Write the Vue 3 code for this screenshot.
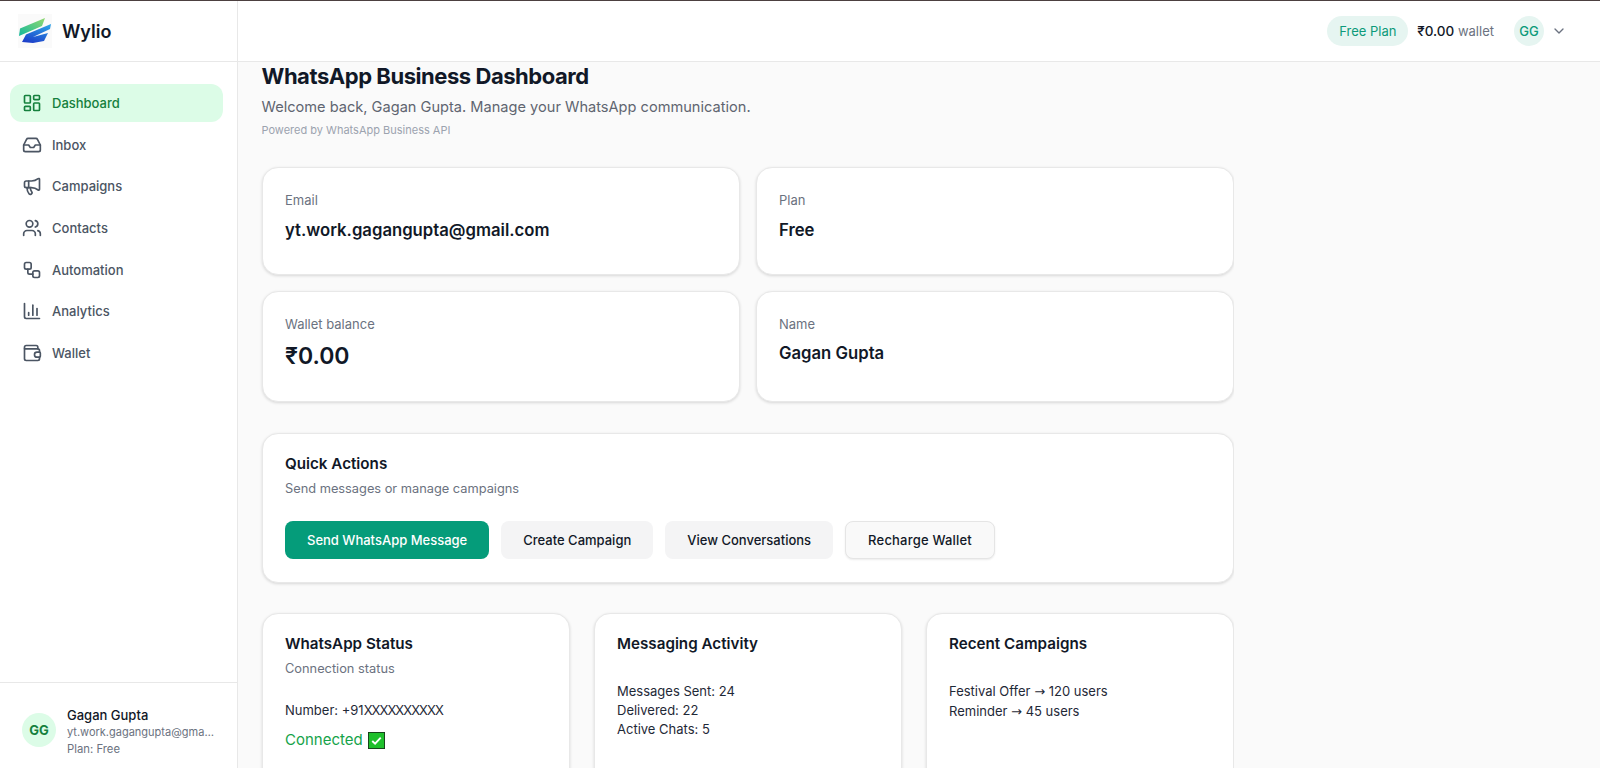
<script setup>
const navItems = [
  { label: 'Dashboard', active: true, paths: ['M4 3h5a1 1 0 0 1 1 1v7a1 1 0 0 1-1 1H4a1 1 0 0 1-1-1V4a1 1 0 0 1 1-1z','M15 3h5a1 1 0 0 1 1 1v3a1 1 0 0 1-1 1h-5a1 1 0 0 1-1-1V4a1 1 0 0 1 1-1z','M15 12h5a1 1 0 0 1 1 1v7a1 1 0 0 1-1 1h-5a1 1 0 0 1-1-1v-7a1 1 0 0 1 1-1z','M4 16h5a1 1 0 0 1 1 1v3a1 1 0 0 1-1 1H4a1 1 0 0 1-1-1v-3a1 1 0 0 1 1-1z'] },
  { label: 'Inbox', paths: ['M22 12h-6l-2 3h-4l-2-3H2','M5.45 5.11 2 12v6a2 2 0 0 0 2 2h16a2 2 0 0 0 2-2v-6l-3.45-6.89A2 2 0 0 0 16.76 4H7.24a2 2 0 0 0-1.79 1.11z'] },
  { label: 'Campaigns', paths: ['M11 6a13 13 0 0 0 8.4-2.8A1 1 0 0 1 21 4v12a1 1 0 0 1-1.6.8A13 13 0 0 0 11 14H5a2 2 0 0 1-2-2V8a2 2 0 0 1 2-2z','M6 14a12 12 0 0 0 2.4 7.2 2 2 0 0 0 3.2-2.4A8 8 0 0 1 10 14','M8 6v8'] },
  { label: 'Contacts', paths: ['M16 21v-2a4 4 0 0 0-4-4H6a4 4 0 0 0-4 4v2','M9 3a4 4 0 1 0 0 8 4 4 0 0 0 0-8z','M22 21v-2a4 4 0 0 0-3-3.87','M16 3.13a4 4 0 0 1 0 7.75'] },
  { label: 'Automation', paths: ['M5 3h4a2 2 0 0 1 2 2v4a2 2 0 0 1-2 2H5a2 2 0 0 1-2-2V5a2 2 0 0 1 2-2z','M15 13h4a2 2 0 0 1 2 2v4a2 2 0 0 1-2 2h-4a2 2 0 0 1-2-2v-4a2 2 0 0 1 2-2z','M7 11v4a2 2 0 0 0 2 2h4'] },
  { label: 'Analytics', paths: ['M3 3v16a2 2 0 0 0 2 2h16','M8 17v-3','M13 17V5','M18 17V9'] },
  { label: 'Wallet', paths: ['M19 7V5a2 2 0 0 0-2-2H5a2 2 0 0 0-2 2v14a2 2 0 0 0 2 2h14a2 2 0 0 0 2-2v-2','M3 7h16a2 2 0 0 1 2 2v2','M18 11h3a1 1 0 0 1 1 1v4a1 1 0 0 1-1 1h-3a3 3 0 0 1 0-6z'] }
]
const stats = [
  { label: 'Email', value: 'yt.work.gagangupta@gmail.com' },
  { label: 'Plan', value: 'Free' },
  { label: 'Wallet balance', value: '₹0.00', big: true },
  { label: 'Name', value: 'Gagan Gupta' }
]
const actions = [
  { label: 'Send WhatsApp Message', kind: 'primary' },
  { label: 'Create Campaign', kind: 'muted' },
  { label: 'View Conversations', kind: 'muted' },
  { label: 'Recharge Wallet', kind: 'outline' }
]
</script>

<template>
  <div class="app">
    <aside class="sidebar">
      <div class="brand">
        <svg class="logo" viewBox="0 0 34 34" aria-hidden="true">
          <rect width="34" height="34" fill="#fafafa" />
          <defs>
            <linearGradient id="g1" x1="0" y1="1" x2="1" y2="0"><stop offset="0" stop-color="#12b89c" /><stop offset="1" stop-color="#92d96f" /></linearGradient>
            <linearGradient id="g2" x1="0.700" y1="0" x2="0.300" y2="1"><stop offset="0" stop-color="#2b9fe6" /><stop offset="1" stop-color="#1d3fc9" /></linearGradient>
          </defs>
          <polygon points="27,4 2,14.500 1,22 24,12" fill="url(#g1)" />
          <polygon points="33,10 8,20.500 4,28 15,29 26,27 30,19 15,23 32,15" fill="url(#g2)" />
        </svg>
        <span class="brand-name">Wylio</span>
      </div>
      <nav class="nav">
        <a v-for="item in navItems" :key="item.label" class="nav-item" :class="{ active: item.active }">
          <svg class="nav-icon" viewBox="0 0 24 24" fill="none" stroke="currentColor" stroke-width="2" stroke-linecap="round" stroke-linejoin="round" aria-hidden="true">
            <path v-for="d in item.paths" :key="d" :d="d" />
          </svg>
          <span>{{ item.label }}</span>
        </a>
      </nav>
      <div class="user">
        <div class="user-avatar">GG</div>
        <div class="user-info">
          <div class="user-name">Gagan Gupta</div>
          <div class="user-mail">yt.work.gagangupta@gmail.com</div>
          <div class="user-plan">Plan: Free</div>
        </div>
      </div>
    </aside>

    <div class="main">
      <header class="topbar">
        <span class="pill">Free Plan</span>
        <span class="balance"><strong>₹0.00</strong> <em>wallet</em></span>
        <span class="top-avatar">GG</span>
        <svg class="chevron" viewBox="0 0 24 24" fill="none" stroke="currentColor" stroke-width="2" stroke-linecap="round" stroke-linejoin="round" aria-hidden="true"><path d="m6 9 6 6 6-6" /></svg>
      </header>

      <main class="content">
        <h1>WhatsApp Business Dashboard</h1>
        <p class="welcome">Welcome back, Gagan Gupta. Manage your WhatsApp communication.</p>
        <p class="powered">Powered by WhatsApp Business API</p>

        <section class="stats">
          <div v-for="s in stats" :key="s.label" class="card stat" :class="{ tall: s.label === 'Wallet balance' || s.label === 'Name' }">
            <div class="stat-label">{{ s.label }}</div>
            <div class="stat-value" :class="{ big: s.big }">{{ s.value }}</div>
          </div>
        </section>

        <section class="card quick">
          <h2>Quick Actions</h2>
          <p class="sub">Send messages or manage campaigns</p>
          <div class="actions">
            <button v-for="a in actions" :key="a.label" class="btn" :class="a.kind">{{ a.label }}</button>
          </div>
        </section>

        <section class="bottom">
          <div class="card panel">
            <h2>WhatsApp Status</h2>
            <p class="sub">Connection status</p>
            <p class="number">Number: +91<span class="mask">XXXXXXXXXX</span></p>
            <p class="connected">Connected
              <svg class="check" viewBox="0 0 18 18" aria-hidden="true">
                <rect x="0.500" y="0.500" width="17" height="17" fill="#1fc02c" stroke="#123d16" />
                <path d="m4.500 9.500 3 2.800 6-6.300" fill="none" stroke="#fff" stroke-width="2" />
              </svg>
            </p>
          </div>
          <div class="card panel">
            <h2>Messaging Activity</h2>
            <ul class="lines">
              <li>Messages Sent: 24</li>
              <li>Delivered: 22</li>
              <li>Active Chats: 5</li>
            </ul>
          </div>
          <div class="card panel">
            <h2>Recent Campaigns</h2>
            <ul class="lines">
              <li>Festival Offer <span class="arrow">→</span> 120 users</li>
              <li>Reminder <span class="arrow">→</span> 45 users</li>
            </ul>
          </div>
        </section>
      </main>
    </div>
  </div>
</template>

<style>
html, body { margin: 0; height: 100%; overflow: hidden; background: #fff; }
</style>

<style scoped>
* { box-sizing: border-box; }
.app {
  display: flex; width: 1600px; height: 768px; overflow: hidden;
  border-top: 1px solid #4c4040; background: #fafafa; color: #111827;
  font-family: Inter, "Liberation Sans", sans-serif;
}
.sidebar {
  width: 238px; flex: none; display: flex; flex-direction: column;
  background: #fff; border-right: 1px solid #e8e8e8;
}
.brand {
  height: 61px; flex: none; display: flex; align-items: center; gap: 10px;
  padding-left: 18px; border-bottom: 1px solid #e8e8e8;
}
.logo { width: 34px; height: 34px; }
.brand-name { font-size: 18px; font-weight: 600; color: #111827; }
.nav { display: flex; flex-direction: column; gap: 4px; padding: 22px 14px 0 10px; }
.nav-item {
  height: 37.700px; display: flex; align-items: center; gap: 10px; padding-left: 12px;
  border-radius: 12px; font-size: 13px; font-weight: 500; color: #4b5563;
}
.nav-item.active { background: #dcfce7; color: #15803d; }
.nav-icon { width: 20px; height: 20px; flex: none; }
.user {
  margin-top: auto; height: 86px; display: flex; align-items: center; gap: 11px;
  padding: 8px 21px 0 22px; border-top: 1px solid #e8e8e8;
}
.user-avatar {
  width: 34px; height: 34px; flex: none; border-radius: 50%; background: #dcfce7; color: #15803d;
  display: flex; align-items: center; justify-content: center; font-size: 13px; font-weight: 700;
}
.user-info { min-width: 0; flex: 1; margin-top: 4px; }
.user-name { font-size: 13px; font-weight: 500; line-height: 18px; color: #111827; }
.user-mail {
  font-size: 11px; line-height: 17px; color: #6b7280;
  white-space: nowrap; overflow: hidden; text-overflow: ellipsis;
}
.user-plan { font-size: 11.300px; line-height: 17px; color: #6b7280; }
.main { flex: 1; min-width: 0; display: flex; flex-direction: column; }
.topbar {
  height: 61px; flex: none; display: flex; align-items: center; background: #fff;
  border-bottom: 1px solid #e8e8e8; padding-right: 33px;
  justify-content: flex-end;
}
.pill {
  height: 30px; width: 81px; border-radius: 15px; background: #e6f5f1; color: #0d9a7a;
  display: flex; align-items: center; justify-content: center; font-size: 13px; font-weight: 400;
}
.balance { margin-left: 9px; font-size: 13px; color: #111827; }
.balance strong { font-weight: 500; font-size: 13.500px; }
.balance em { font-style: normal; color: #6b7280; }
.top-avatar {
  margin-left: 20px; width: 30px; height: 30px; border-radius: 50%; background: #e6f5f1; color: #0d9a7a;
  display: flex; align-items: center; justify-content: center; font-size: 13px; font-weight: 500;
}
.chevron { width: 16px; height: 16px; margin-left: 7px; color: #6b7280; }
.content { flex: 1; min-height: 0; overflow: hidden; padding: 0 0 0 23.500px; width: 995.500px; }
h1 { margin: 0; font-size: 22px; line-height: 28px; font-weight: 700; letter-spacing: -0.450px; color: #111827; }
.welcome { margin: 6px 0 0; font-size: 14.600px; line-height: 22px; color: #5f6570; }
.powered { margin: 4px 0 0; font-size: 11px; line-height: 16px; color: #9ca3af; }
.stats { display: grid; grid-template-columns: 1fr 1fr; gap: 16px; margin-top: 29px; }
.card { background: #fff; border: 1px solid #e8e8e8; border-radius: 16px; box-shadow: 0 1px 3px rgba(0,0,0,.14); }
.stat { height: 108px; padding: 23px 22.500px 0; }
.stat.tall { height: 111px; padding-top: 22.500px; }
.stat-label { font-size: 13px; line-height: 18px; color: #6b7280; }
.stat-value { margin-top: 8.500px; font-size: 16.700px; line-height: 24px; font-weight: 600; color: #111827; }
.stat-value.big { font-size: 23px; line-height: 34px; margin-top: 6.500px; font-weight: 600; }
.quick { margin-top: 31px; height: 150px; padding: 19px 22.500px 0; }
h2 { margin: 0; font-size: 15.200px; line-height: 22px; font-weight: 600; color: #111827; }
.sub { margin: 4px 0 0; font-size: 12.800px; line-height: 20px; color: #6b7280; }
.actions { display: flex; gap: 12px; margin-top: 22px; }
.btn {
  height: 38px; padding: 0 22px; border-radius: 8px; border: 0; font: inherit;
  font-size: 13px; font-weight: 500; color: #111827;
}
.btn.primary { background: #059c7a; color: #fff; }
.btn.muted { background: #f4f4f5; }
.btn.outline { background: #f9f9f9; border: 1px solid #e5e5e5; box-shadow: 0 1px 2px rgba(0,0,0,.08); letter-spacing: 0.200px; }
.bottom { display: grid; grid-template-columns: repeat(3, 1fr); gap: 24px; margin-top: 30px; }
.panel { height: 190px; padding: 19px 22.500px 0; }
.number { margin: 21px 0 0; font-size: 13px; line-height: 20px; color: #1f2937; }
.mask { letter-spacing: -0.950px; }
.connected { margin: 9px 0 0; display: flex; align-items: center; gap: 5px; font-size: 15px; line-height: 22px; color: #16a34a; font-weight: 400; }
.check { width: 17px; height: 17px; }
.lines { list-style: none; margin: 27px 0 0; padding: 0; font-size: 13px; line-height: 18.800px; color: #1f2937; }
.arrow { font-family: "DejaVu Sans", sans-serif; }
</style>
